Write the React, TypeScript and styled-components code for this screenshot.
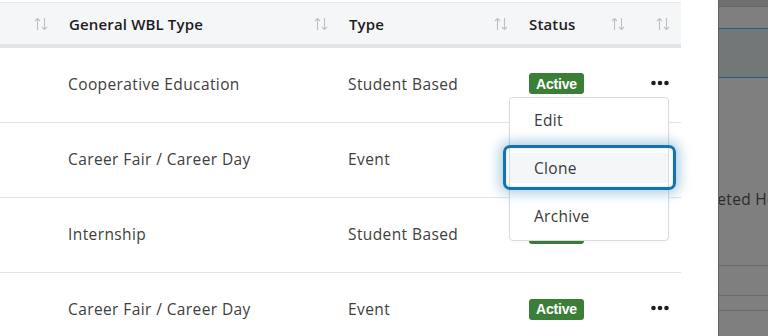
import React from "react";
import styled, { createGlobalStyle } from "styled-components";

const Global = createGlobalStyle`
  html, body { margin: 0; padding: 0; }
  body {
    width: 768px;
    height: 336px;
    overflow: hidden;
    background: #ffffff;
    font-family: "Open Sans", "Liberation Sans", sans-serif;
  }
`;

const Page = styled.div`
  display: flex;
  width: 768px;
  height: 336px;
  overflow: hidden;
`;

const Panel = styled.div`
  width: 718px;
  flex: none;
  background: #ffffff;
  padding-top: 2px;
  box-sizing: border-box;
  position: relative;
`;

const Table = styled.div`
  width: 681px;
  display: grid;
  grid-template-columns: 55px 280px 180px 118px 48px;
  border-top: 1px solid #e6e8ec;
`;

const HeadCell = styled.div<{ $padRight?: number; $iconOnly?: boolean }>`
  height: 41px;
  background: #f5f6f8;
  border-bottom: 4px solid #e2e4e8;
  display: flex;
  align-items: center;
  justify-content: ${(p) => (p.$iconOnly ? "flex-end" : "space-between")};
  padding: 0 ${(p) => p.$padRight ?? 7}px 0 14px;
  font-size: 15px;
  font-weight: 600;
  color: #1d1d1f;
  letter-spacing: 0.15px;
`;

const Cell = styled.div<{ $last?: boolean }>`
  height: 75px;
  box-sizing: border-box;
  border-bottom: ${(p) => (p.$last ? "none" : "1px solid #e2e4e8")};
  display: flex;
  align-items: center;
  padding: 0 0 3px 13px;
  font-size: 15.5px;
  color: #404040;
  letter-spacing: 0.4px;
`;

const DotsCell = styled(Cell)`
  padding: 0 12px 5px 0;
  justify-content: flex-end;
`;

const Badge = styled.span`
  display: inline-flex;
  align-items: center;
  justify-content: center;
  width: 55px;
  height: 21px;
  border-radius: 3px;
  background: #3b7e38;
  color: #ffffff;
  font-family: "Liberation Sans", Arial, sans-serif;
  font-weight: 700;
  font-size: 14px;
  letter-spacing: -0.2px;
  margin-left: 1px;
`;

const Menu = styled.div`
  position: absolute;
  left: 509px;
  top: 97px;
  width: 160px;
  height: 144px;
  box-sizing: border-box;
  background: #ffffff;
  border: 1px solid #d9dce1;
  border-radius: 4px;
  display: flex;
  flex-direction: column;
  padding: 7px 0 0 0;
  gap: 18px;
  box-shadow: 0 1px 3px rgba(0, 0, 0, 0.04);
`;

const MenuItem = styled.div<{ $focused?: boolean }>`
  position: relative;
  height: 30px;
  display: flex;
  align-items: center;
  padding-left: 24px;
  font-size: 15.5px;
  color: #3a3a3a;
  letter-spacing: 0.3px;
  background: ${(p) => (p.$focused ? "#f5f6f8" : "transparent")};

  ${(p) =>
    p.$focused
      ? `&::after {
           content: "";
           position: absolute;
           top: -8px;
           bottom: -7px;
           left: -7px;
           right: -8px;
           border: 3.5px solid #1572b1;
           border-radius: 7px;
           box-shadow: 0 0 12px 4px rgba(21, 114, 177, 0.33), inset 0 0 3px rgba(21,114,177,0.25);
           pointer-events: none;
         }`
      : ""}
`;

const Backdrop = styled.div`
  flex: 1;
  background: #7f7f7f;
  border-left: 1px solid #626262;
  display: flex;
  flex-direction: column;
  overflow: hidden;
`;

const Band = styled.div<{ $h: number; $bg: string; $line?: string }>`
  height: ${(p) => p.$h}px;
  flex: none;
  background: ${(p) => p.$bg};
  border-bottom: ${(p) => (p.$line ? `1px solid ${p.$line}` : "none")};
`;

const BackText = styled.div`
  height: 40px;
  flex: none;
  display: flex;
  align-items: center;
  white-space: nowrap;
  font-size: 15.5px;
  color: #2c2c2c;
  letter-spacing: 0.3px;
  margin-left: -50px;
`;

const SortIcon = () => (
  <svg width="14" height="14" viewBox="0 0 14 14" fill="none" stroke="#bcc0c8" strokeWidth="1.1">
    <path d="M3.5 13V1.5M1 4l2.5-2.5L6 4" />
    <path d="M10.5 1v11.5M8 10l2.5 2.5L13 10" />
  </svg>
);

const Dots = () => (
  <svg width="18" height="6" viewBox="0 0 18 6">
    <circle cx="2.5" cy="3" r="2.3" fill="#1f1f1f" />
    <circle cx="9" cy="3" r="2.3" fill="#1f1f1f" />
    <circle cx="15.5" cy="3" r="2.3" fill="#1f1f1f" />
  </svg>
);

const rows = [
  { general: "Cooperative Education", type: "Student Based" },
  { general: "Career Fair / Career Day", type: "Event" },
  { general: "Internship", type: "Student Based" },
  { general: "Career Fair / Career Day", type: "Event" },
];

export default function App() {
  return (
    <>
      <Global />
      <Page>
        <Panel>
          <Table>
            <HeadCell $iconOnly>
              <SortIcon />
            </HeadCell>
            <HeadCell>
              <span>General WBL Type</span>
              <SortIcon />
            </HeadCell>
            <HeadCell>
              <span>Type</span>
              <SortIcon />
            </HeadCell>
            <HeadCell $padRight={8}>
              <span>Status</span>
              <SortIcon />
            </HeadCell>
            <HeadCell $padRight={11} $iconOnly>
              <SortIcon />
            </HeadCell>
            {rows.map((r, i) => {
              const last = i === rows.length - 1;
              return (
                <React.Fragment key={i}>
                  <Cell $last={last} />
                  <Cell $last={last}>{r.general}</Cell>
                  <Cell $last={last}>{r.type}</Cell>
                  <Cell $last={last}>
                    <Badge>Active</Badge>
                  </Cell>
                  <DotsCell $last={last}>
                    <Dots />
                  </DotsCell>
                </React.Fragment>
              );
            })}
          </Table>
          <Menu>
            <MenuItem>Edit</MenuItem>
            <MenuItem $focused>Clone</MenuItem>
            <MenuItem>Archive</MenuItem>
          </Menu>
        </Panel>
        <Backdrop>
          <Band $h={6} $bg="#6f6f6f" $line="#676767" />
          <Band $h={21} $bg="#7f7f7f" $line="#1d5e8e" />
          <Band $h={48} $bg="#727778" $line="#1d5e8e" />
          <Band $h={101} $bg="#7f7f7f" />
          <BackText>Completed Hours</BackText>
          <Band $h={46} $bg="#7f7f7f" $line="#6a6a6a" />
          <Band $h={29} $bg="#7f7f7f" $line="#6a6a6a" />
          <Band $h={14} $bg="#7f7f7f" $line="#6a6a6a" />
        </Backdrop>
      </Page>
    </>
  );
}
